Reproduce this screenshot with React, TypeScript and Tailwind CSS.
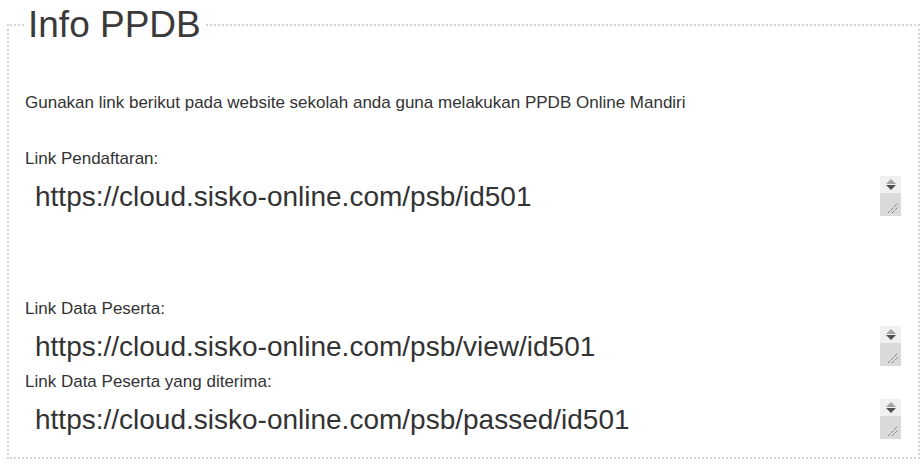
const links = [
  { label: "Link Pendaftaran:", url: "https://cloud.sisko-online.com/psb/id501", gap: "mb-[83px]" },
  { label: "Link Data Peserta:", url: "https://cloud.sisko-online.com/psb/view/id501", gap: "mb-[6px]" },
  { label: "Link Data Peserta yang diterima:", url: "https://cloud.sisko-online.com/psb/passed/id501", gap: "mb-0" },
];

const FakeScrollbar = () => {
  return (
    <div className="flex w-[21px] shrink-0 flex-col">
      <div className="flex h-[17px] flex-col items-center justify-center gap-[1px] bg-[#f0f0f0]">
        <svg width="10" height="5" viewBox="0 0 10 5">
          <polygon points="5,0 10,5 0,5" fill="#a3a3a3" />
        </svg>
        <svg width="10" height="5" viewBox="0 0 10 5">
          <polygon points="0,0 10,0 5,5" fill="#505050" />
        </svg>
      </div>
      <div className="relative flex-1 bg-[#dadada]">
        <svg className="absolute bottom-[2px] right-[2px]" width="12" height="12" viewBox="0 0 12 12">
          <line x1="1" y1="11" x2="11" y2="1" stroke="#555" strokeWidth="1" strokeDasharray="1 1" />
          <line x1="5" y1="11" x2="11" y2="5" stroke="#555" strokeWidth="1" strokeDasharray="1 1" />
        </svg>
      </div>
    </div>
  );
};

function LinkField({ label, url, gap }: { label: string; url: string; gap: string }) {
  return (
    <div className={gap}>
      <label className="mb-[7px] block text-[17px] leading-[20px]">{label}</label>
      <div className="flex h-[40px] w-[876px]">
        <textarea
          readOnly
          rows={1}
          defaultValue={url}
          className="h-[40px] flex-1 resize-none overflow-hidden border-0 bg-white px-[10px] pt-[5px] text-[28px] leading-[32px] text-[#333] outline-none"
          style={{ fontFamily: "inherit" }}
        />
        <FakeScrollbar />
      </div>
    </div>
  );
}

export default function App() {
  return (
    <div
      className="h-[468px] w-[922px] bg-white pl-[7px] text-[#333]"
      style={{ fontFamily: '"Liberation Sans", Arial, sans-serif' }}
    >
      <fieldset className="h-[459px] w-[913px] border-2 border-dotted border-[#d4d4d4] px-[16px] pb-[16px]">
        <legend className="px-[3px] text-[37px] leading-[50px] text-[#3a3a3a]">Info PPDB</legend>
        <p className="mt-[43px] mb-[36px] text-[17px] leading-[20px]">
          Gunakan link berikut pada website sekolah anda guna melakukan PPDB Online Mandiri
        </p>
        {links.map((l) => (
          <LinkField key={l.url} {...l} />
        ))}
      </fieldset>
    </div>
  );
}
